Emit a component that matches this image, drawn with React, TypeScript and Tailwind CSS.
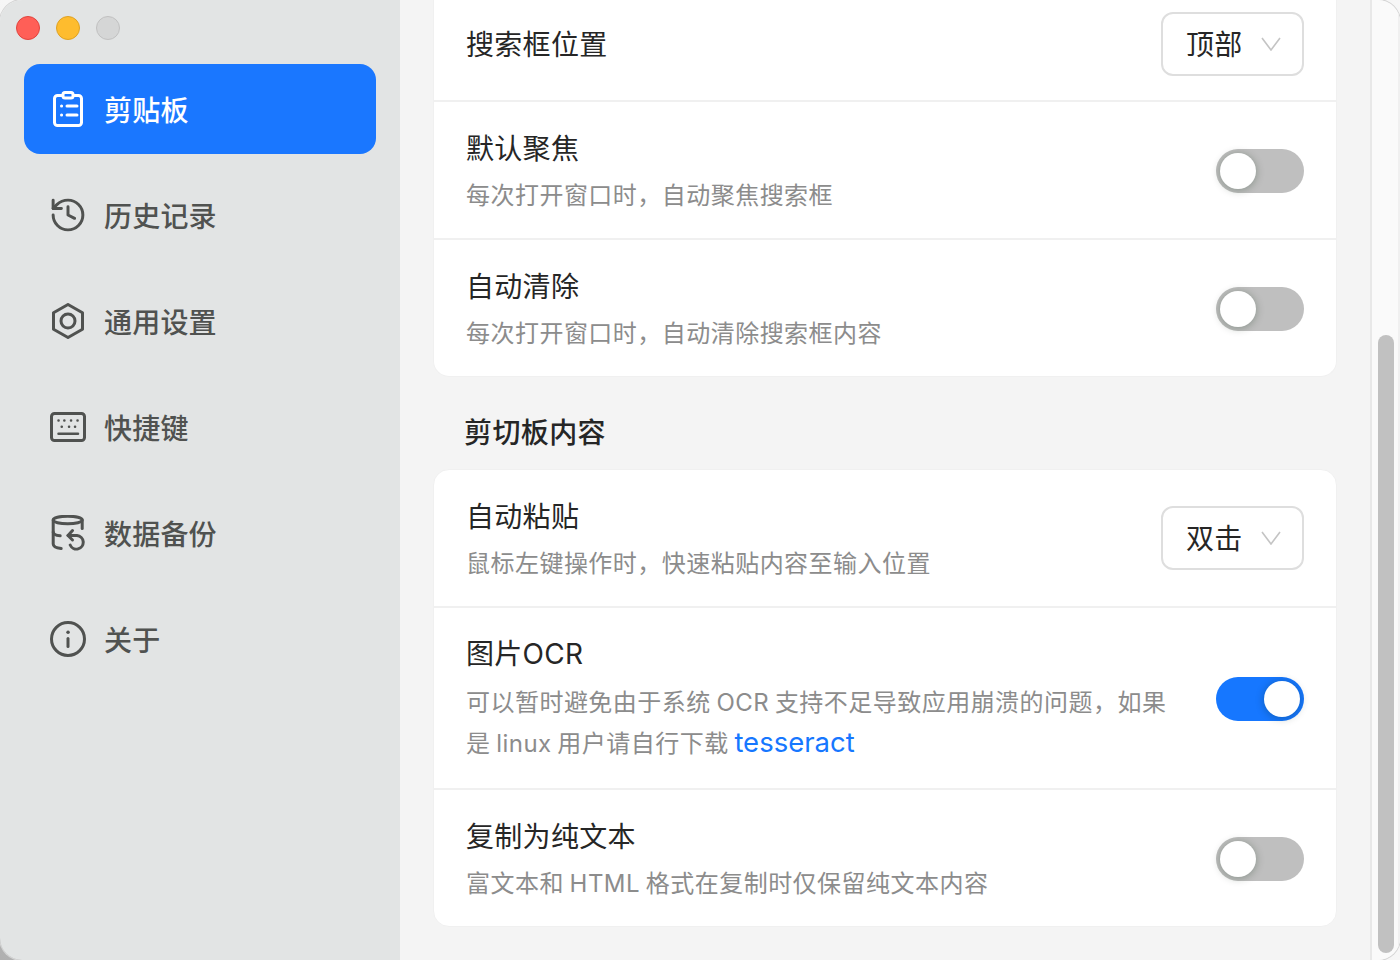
type IconProps = { className?: string };

function ClipboardIcon({ className }: IconProps) {
  return (
    <svg viewBox="0 0 36 36" width="36" height="36" fill="none" stroke="currentColor" strokeWidth="3" strokeLinecap="round" strokeLinejoin="round" className={className}>
      <rect x="4.5" y="4.5" width="27" height="30" rx="3" />
      <rect x="13" y="1.5" width="10" height="5.5" rx="2" fill="#1a77ff" />
      <path d="M17 15h10M17 24h10" />
      <path d="M11.5 15h.1M11.5 24h.1" />
    </svg>
  );
}

function HistoryIcon({ className }: IconProps) {
  return (
    <svg viewBox="1.1 1.1 21.8 21.8" width="36" height="36" fill="none" stroke="currentColor" strokeWidth="1.8" strokeLinecap="round" strokeLinejoin="round" className={className}>
      <path d="M3 12a9 9 0 1 0 9-9 9.75 9.75 0 0 0-6.74 2.74L3 8" />
      <path d="M3 3v5h5" />
      <path d="M12 7v5l4 2" />
    </svg>
  );
}

function SettingsIcon({ className }: IconProps) {
  return (
    <svg viewBox="0 0 36 36" width="36" height="36" fill="none" stroke="currentColor" strokeWidth="3" strokeLinejoin="round" className={className}>
      <path d="M18 1.5 32.5 9.7v16.6L18 34.5 3.5 26.3V9.7Z" />
      <circle cx="18" cy="18" r="7" />
    </svg>
  );
}

function KeyboardIcon({ className }: IconProps) {
  return (
    <svg viewBox="0 0 36 36" width="36" height="36" fill="none" stroke="currentColor" strokeWidth="3" strokeLinecap="round" className={className}>
      <rect x="1.5" y="4.5" width="33" height="27" rx="3" />
      <path d="M8.5 24.7h19.5" strokeWidth="2.5" />
      <path d="M8.5 11.5h.1M14.3 11.5h.1M21 11.5h.1M27.5 11.5h.1M11.7 17.7h.1M19 17.7h.1M25 17.7h.1" strokeWidth="2.5" />
    </svg>
  );
}

function DatabaseIcon({ className }: IconProps) {
  return (
    <svg viewBox="0 0 36 36" width="36" height="36" fill="none" stroke="currentColor" strokeWidth="3" strokeLinecap="round" strokeLinejoin="round" className={className}>
      <ellipse cx="17.7" cy="5" rx="14.5" ry="3.8" />
      <path d="M3.2 5v24c0 2.5 3.5 4 8 4.6" />
      <path d="M32.2 5v8.5" />
      <path d="M3.2 17c0 2.2 3 3.4 7 3.8" />
      <path d="M22.5 15.5 18 20.5h9a6.8 6.8 0 1 1-6.8 9.5" />
      <path d="M18 20.5l4.5 4.5" />
    </svg>
  );
}

function InfoIcon({ className }: IconProps) {
  return (
    <svg viewBox="0 0 36 36" width="36" height="36" fill="none" stroke="currentColor" strokeWidth="3" strokeLinecap="round" className={className}>
      <circle cx="18" cy="18" r="16.5" />
      <path d="M18 17.5v8" />
      <path d="M18 11.2h.1" strokeWidth="3.4" />
    </svg>
  );
}

const navItems = [
  { label: '剪贴板', icon: ClipboardIcon, active: true },
  { label: '历史记录', icon: HistoryIcon },
  { label: '通用设置', icon: SettingsIcon },
  { label: '快捷键', icon: KeyboardIcon },
  { label: '数据备份', icon: DatabaseIcon },
  { label: '关于', icon: InfoIcon },
];

function Switch({ on = false }: { on?: boolean }) {
  return (
    <div className={`relative mt-0.5 h-11 w-[88px] shrink-0 rounded-full ${on ? 'bg-[#1677ff]' : 'bg-[#bfbfbf]'}`}>
      <span className={`absolute top-1 h-9 w-9 rounded-full bg-white shadow-[0_1px_8px_rgba(0,35,11,0.3)] ${on ? 'right-1' : 'left-1'}`} />
    </div>
  );
}

function Select({ value }: { value: string }) {
  return (
    <div className="flex h-16 w-[143px] shrink-0 items-center rounded-xl border-2 border-[#dedede] bg-white pl-[23px]">
      <span className="pt-0.5 text-[28px] leading-none tracking-[0.3px] text-[#262626]">{value}</span>
      <svg viewBox="0 0 20 14" width="20" height="14" fill="none" stroke="#c4c4c4" strokeWidth="1.6" className="ml-[18px]">
        <path d="M1 1l9 12 9-12" />
      </svg>
    </div>
  );
}

const descClass = 'text-2xl tracking-[0.47px] text-[#8c8c8c] [word-spacing:-1.5px]';
const titleClass = 'text-[28px] leading-[44px] tracking-[0.3px] text-[#262626]';

function Row({ title, desc, control }: { title: string; desc: string; control: React.ReactNode }) {
  return (
    <div className="flex h-[138px] items-center justify-between border-t-2 border-[#f0f0f0] pl-8 pr-8 first:h-[136px] first:border-t-0">
      <div className="mt-[3px]">
        <h3 className={titleClass}>{title}</h3>
        <p className={`mt-1 leading-[41px] ${descClass}`}>{desc}</p>
      </div>
      {control}
    </div>
  );
}

export default function App() {
  return (
    <div className="h-[960px] w-[1400px] overflow-hidden bg-gradient-to-tr from-[#b0b0b0] via-[#f6f6f6] to-[#f6f6f6] font-['Inter','Noto_Sans_CJK_SC',sans-serif]">
      <div className="flex h-full overflow-hidden rounded-[22px] shadow-[0_0_0_1px_#d4d4d4]">
        {/* Sidebar */}
        <aside className="w-[400px] shrink-0 bg-[#e2e4e4] px-6 pt-4">
          <div className="-ml-2 flex h-6 items-center gap-4">
            <span className="h-6 w-6 rounded-full border border-[#e0443e] bg-[#ff5f57]" />
            <span className="h-6 w-6 rounded-full border border-[#dea123] bg-[#febc2e]" />
            <span className="h-6 w-6 rounded-full border border-[#c0c0c0] bg-[#d5d6d6]" />
          </div>
          <nav className="mt-6 flex flex-col gap-4">
            {navItems.map((item) => {
              const Icon = item.icon;
              return (
                <div
                  key={item.label}
                  className={`flex h-[90px] items-center gap-[18px] rounded-2xl pl-[26px] text-[28px] font-medium tracking-[0.2px] ${
                    item.active ? 'bg-[#1a77ff] text-white' : 'text-[#505250]'
                  }`}
                >
                  <Icon className="shrink-0" />
                  <span className="pt-1">{item.label}</span>
                </div>
              );
            })}
          </nav>
        </aside>

        {/* Settings */}
        <main className="w-[970px] shrink-0 bg-[#f4f4f4] px-[33px]">
          <section className="overflow-hidden rounded-b-2xl border-x border-b border-[#f0f0f0] bg-white">
            <div className="flex h-[100px] items-center justify-between pb-3 pl-8 pr-8">
              <h3 className={`pt-0.5 ${titleClass}`}>搜索框位置</h3>
              <Select value="顶部" />
            </div>
            <Row title="默认聚焦" desc="每次打开窗口时，自动聚焦搜索框" control={<Switch />} />
            <Row title="自动清除" desc="每次打开窗口时，自动清除搜索框内容" control={<Switch />} />
          </section>

          <h2 className="flex h-[92px] items-center pl-[31px] pt-[20px] text-[28px] font-medium tracking-[0.4px] text-[#262626]">剪切板内容</h2>

          <section className="overflow-hidden rounded-2xl border border-[#f0f0f0] bg-white">
            <Row title="自动粘贴" desc="鼠标左键操作时，快速粘贴内容至输入位置" control={<Select value="双击" />} />
            <div className="flex h-[182px] items-center justify-between border-t-2 border-[#f0f0f0] pl-8 pr-8">
              <div className="w-[706px]">
                <h3 className={titleClass}>图片OCR</h3>
                <p className={`mt-[6px] leading-[41px] ${descClass}`}>
                  可以暂时避免由于系统 OCR 支持不足导致应用崩溃的问题，如果是 linux 用户请自行下载{' '}
                  <a className="text-[27.5px] leading-none tracking-normal text-[#1677ff]">tesseract</a>
                </p>
              </div>
              <Switch on />
            </div>
            <Row title="复制为纯文本" desc="富文本和 HTML 格式在复制时仅保留纯文本内容" control={<Switch />} />
          </section>
        </main>

        {/* Scrollbar */}
        <div className="flex-1 border-x-2 border-l-[#e8e8e8] border-r-[#f0f0f0] bg-[#fafafa] pb-[7px] pl-[6px] pr-1 pt-[335px]">
          <div className="h-full w-4 rounded-lg bg-[#c1c1c1]" />
        </div>
      </div>
    </div>
  );
}
